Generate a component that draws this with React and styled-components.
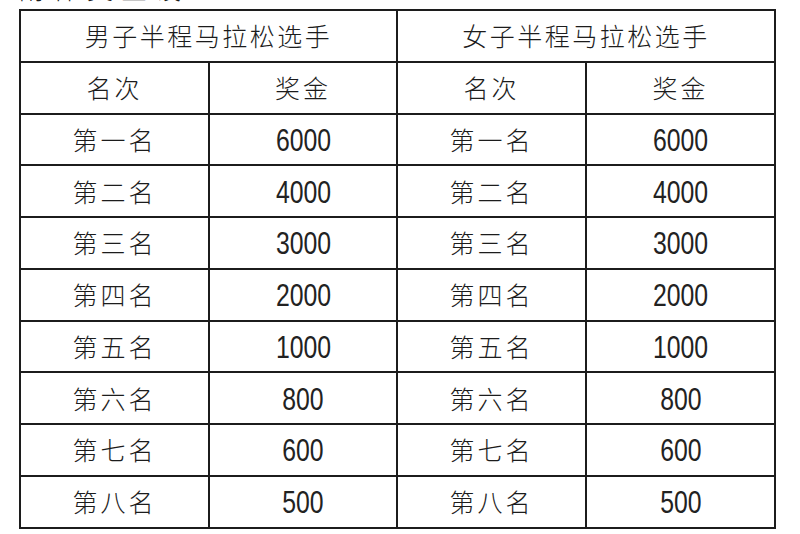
import React from "react";
import styled, { createGlobalStyle } from "styled-components";

const Global = createGlobalStyle`
  html, body { margin: 0; padding: 0; background: #fff; }
  body { width: 800px; height: 534px; overflow: hidden; font-family: "Noto Sans CJK SC", "Noto Sans", sans-serif; color: #1c1c1c; }
`;

const Page = styled.div`
  padding-left: 19px;
`;

const Caption = styled.div`
  height: 9px;
  overflow: hidden;
  display: flex;
  align-items: flex-end;
`;

const CaptionText = styled.span`
  font-size: 26px;
  line-height: 26px;
  font-weight: 300;
  letter-spacing: 8px;
  margin-bottom: 8px;
`;

const Table = styled.table`
  border-collapse: collapse;
  table-layout: fixed;
  width: 756px;
  border: 2px solid #1c1c1c;
`;

const Cell = styled.td`
  border: 2px solid #1c1c1c;
  height: 49.75px;
  padding: 0;
  text-align: center;
  vertical-align: middle;
  font-family: "Noto Sans CJK SC", sans-serif;
  font-size: 25px;
  font-weight: 300;
  letter-spacing: ${(p) => (p.$wide ? 2.5 : 3)}px;
  line-height: 1;
`;

const Num = styled.span`
  display: inline-block;
  font-family: "Liberation Sans", Arial, sans-serif;
  font-size: 31px;
  font-weight: 400;
  letter-spacing: 0;
  transform: scaleX(0.8);
  padding-top: 2px;
  color: #222;
`;

const ranks = ["第一名", "第二名", "第三名", "第四名", "第五名", "第六名", "第七名", "第八名"];
const prizes = ["6000", "4000", "3000", "2000", "1000", "800", "600", "500"];

export default function App() {
  return (
    <>
      <Global />
      <Page>
        <Caption>
          <CaptionText>附件奖金设置</CaptionText>
        </Caption>
        <Table>
          <colgroup>
            <col style={{ width: 189 }} />
            <col style={{ width: 188 }} />
            <col style={{ width: 189 }} />
            <col style={{ width: 189 }} />
          </colgroup>
          <tbody>
            <tr>
              <Cell colSpan={2} $wide>男子半程马拉松选手</Cell>
              <Cell colSpan={2} $wide>女子半程马拉松选手</Cell>
            </tr>
            <tr>
              <Cell>名次</Cell>
              <Cell>奖金</Cell>
              <Cell>名次</Cell>
              <Cell>奖金</Cell>
            </tr>
            {ranks.map((r, i) => (
              <tr key={r}>
                <Cell>{r}</Cell>
                <Cell><Num>{prizes[i]}</Num></Cell>
                <Cell>{r}</Cell>
                <Cell><Num>{prizes[i]}</Num></Cell>
              </tr>
            ))}
          </tbody>
        </Table>
      </Page>
    </>
  );
}
